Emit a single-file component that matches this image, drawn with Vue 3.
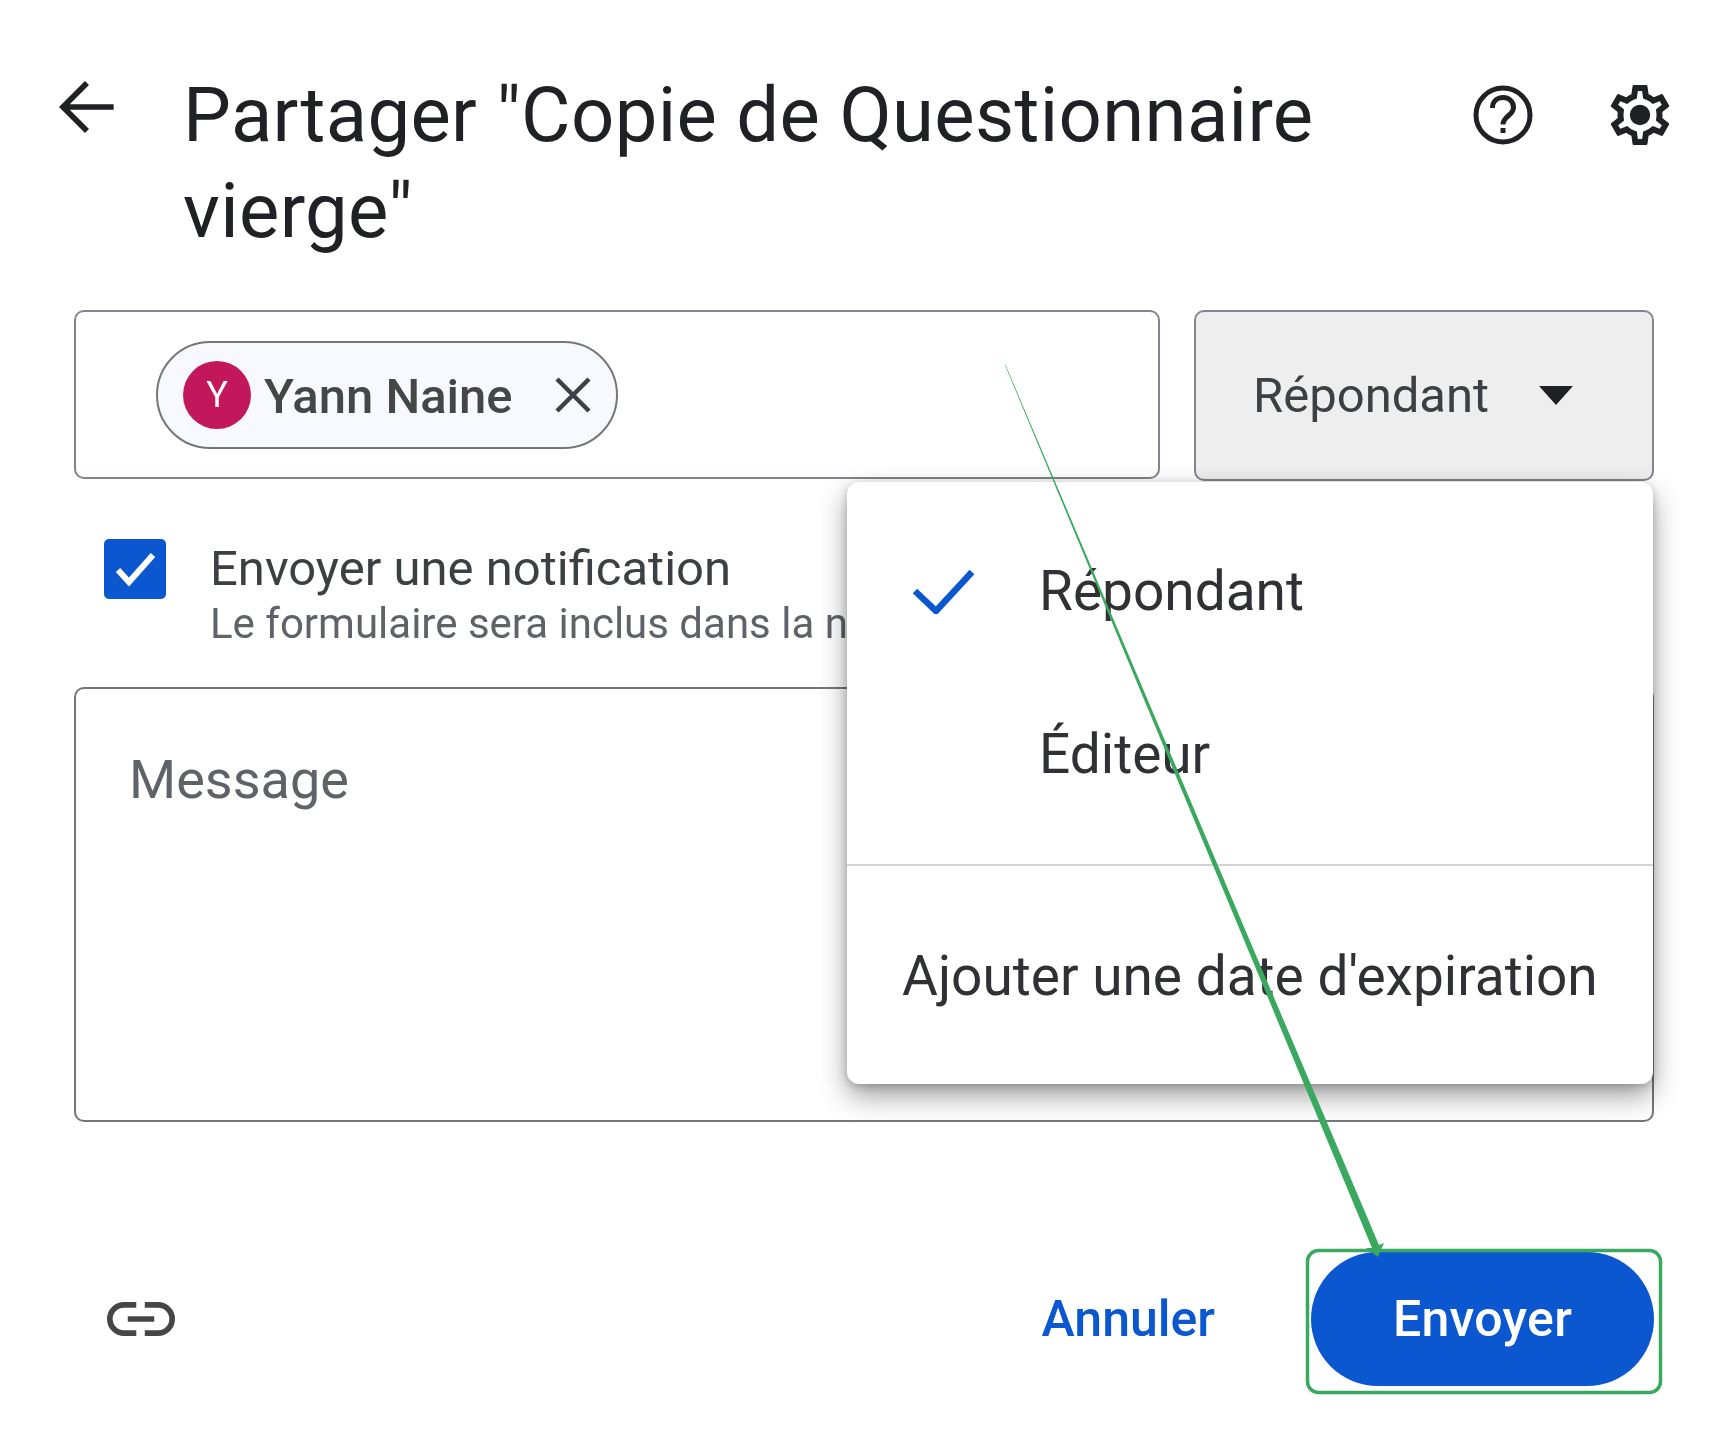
<script setup>
const roles = ['Répondant', 'Éditeur']
</script>

<template>
  <div class="page">
    <header class="header">
      <svg class="back" viewBox="0 0 24 24"><path d="M20 12H5.5M12 4.8 4.8 12l7.2 7.2" fill="none" stroke="#202124" stroke-width="1.7" /></svg>
      <h1 class="title">Partager "Copie de Questionnaire vierge"</h1>
      <svg class="head-icon help" viewBox="0 0 72 72">
        <circle cx="36" cy="36" r="27" fill="none" stroke="#202124" stroke-width="5" />
        <path d="M25.5 29c0-6.5 4.5-10.500 10.500-10.500S46.500 22.500 46.500 28.500c0 8-10.500 8.500-10.500 17" fill="none" stroke="#202124" stroke-width="5" />
        <rect x="33.500" y="49" width="5" height="5" fill="#202124" />
      </svg>
      <svg class="head-icon" viewBox="0 0 24 24"><path d="M19.43 12.98c.04-.32.07-.64.07-.98 0-.34-.03-.66-.07-.98l2.11-1.65c.19-.15.24-.42.12-.64l-2-3.46c-.09-.16-.26-.25-.44-.25-.06 0-.12.01-.17.03l-2.49 1c-.52-.4-1.08-.73-1.69-.98l-.38-2.65C14.46 2.18 14.25 2 14 2h-4c-.25 0-.46.18-.49.42l-.38 2.65c-.61.25-1.17.59-1.69.98l-2.49-1c-.06-.02-.12-.03-.18-.03-.17 0-.34.09-.43.25l-2 3.46c-.13.22-.07.49.12.64l2.11 1.65c-.04.32-.07.65-.07.98 0 .33.03.66.07.98l-2.11 1.65c-.19.15-.24.42-.12.64l2 3.46c.09.16.26.25.44.25.06 0 .12-.01.17-.03l2.49-1c.52.4 1.08.73 1.69.98l.38 2.65c.03.24.24.42.49.42h4c.25 0 .46-.18.49-.42l.38-2.65c.61-.25 1.17-.59 1.69-.98l2.49 1c.06.02.12.03.18.03.17 0 .34-.09.43-.25l2-3.46c.12-.22.07-.49-.12-.64l-2.11-1.65zm-1.98-1.71c.04.31.05.52.05.73 0 .21-.02.43-.05.73l-.14 1.13.89.7 1.08.84-.7 1.21-1.27-.51-1.04-.42-.9.68c-.43.32-.84.56-1.25.73l-1.06.43-.16 1.13-.2 1.35h-1.4l-.19-1.35-.16-1.13-1.06-.43c-.43-.18-.83-.41-1.23-.71l-.91-.7-1.06.43-1.27.51-.7-1.21 1.08-.84.89-.7-.14-1.13c-.03-.31-.05-.54-.05-.74s.02-.43.05-.73l.14-1.13-.89-.7-1.08-.84.7-1.21 1.27.51 1.04.42.9-.68c.43-.32.84-.56 1.25-.73l1.06-.43.16-1.13.2-1.35h1.39l.19 1.35.16 1.13 1.06.43c.43.18.83.41 1.23.71l.91.7 1.06-.43 1.27-.51.7 1.21-1.07.85-.89.7.14 1.13zM12 8.600a3.400 3.400 0 1 0 0 6.800 3.400 3.400 0 0 0 0-6.800z" /></svg>
    </header>

    <div class="share-row">
      <div class="people">
        <div class="chip">
          <span class="avatar">Y</span>
          <span class="chip-name">Yann Naine</span>
          <svg class="chip-close" viewBox="0 0 36 36"><path d="M2 2l32 32M34 2 2 34" fill="none" stroke="#3c4043" stroke-width="4.500" /></svg>
        </div>
      </div>
      <div class="role-select">
        <span>Répondant</span>
        <span class="caret"></span>
      </div>
    </div>

    <div class="notify">
      <span class="checkbox">
        <svg viewBox="0 0 62 60"><path d="M14 31l11 12 24-27" fill="none" stroke="#fff" stroke-width="6" /></svg>
      </span>
      <div class="notify-text">
        <div class="notify-title">Envoyer une notification</div>
        <div class="notify-sub">Le formulaire sera inclus dans la notification</div>
      </div>
    </div>

    <div class="message">Message</div>

    <footer class="footer">
      <svg class="link" viewBox="0 0 72 36"><path d="M31 3H18a15 15 0 0 0 0 30h13M40 3h14a15 15 0 0 1 0 30H40M22 18h28" fill="none" stroke="#444746" stroke-width="6" /></svg>
      <span class="cancel">Annuler</span>
      <button class="send">Envoyer</button>
    </footer>

    <div class="menu">
      <div class="roles">
        <div v-for="(role, i) in roles" :key="role" class="role">
          <svg v-if="i === 0" class="tick" viewBox="0 0 62 44"><path d="M2 21l21 20L59 2" fill="none" stroke="#0b57d0" stroke-width="6.500" /></svg>
          <span>{{ role }}</span>
        </div>
      </div>
      <div class="expiry">Ajouter une date d'expiration</div>
    </div>

    <!-- annotation drawn over the screenshot -->
    <svg class="annotation" viewBox="0 0 1719 1452">
      <polygon points="1005,365 1005.600,365 1379,1245 1384,1243 1378,1257 1366,1248 1372,1248" fill="#3aa95f" />
      <rect x="1307.500" y="1250.500" width="353" height="142" rx="11" fill="none" stroke="#3aa95f" stroke-width="3.500" />
    </svg>
  </div>
</template>

<style scoped>
.page {
  position: relative;
  width: 1719px;
  height: 1452px;
  overflow: hidden;
  background: #fff;
  font-family: Roboto, "Liberation Sans", sans-serif;
  color: #3c4043;
  filter: blur(0.7px);
}

.header {
  display: flex;
  align-items: flex-start;
  padding: 67px 43px 0 47px;
}

.back {
  width: 80px;
  height: 80px;
  margin-right: 56px;
  flex: none;
}

.title {
  width: 1240px;
  margin: 0;
  font-size: 76px;
  line-height: 96px;
  font-weight: 400;
  letter-spacing: 0.35px;
  color: #202124;
  flex: none;
}

.head-icon {
  width: 72px;
  height: 72px;
  margin-top: 12px;
  fill: #202124;
  flex: none;
}

.help {
  margin-left: auto;
  margin-right: 65px;
}

.share-row {
  display: flex;
  gap: 34px;
  margin: 51px 65px 0 74px;
  align-items: flex-start;
}

.people {
  display: flex;
  align-items: center;
  width: 1086px;
  height: 169px;
  box-sizing: border-box;
  padding-left: 80px;
  border: 2px solid #80868b;
  border-radius: 10px;
}

.chip {
  display: flex;
  align-items: center;
  width: 462px;
  height: 108px;
  box-sizing: border-box;
  padding-left: 25px;
  background: #f8f9fe;
  border: 2px solid #747775;
  border-radius: 54px;
}

.avatar {
  display: flex;
  align-items: center;
  justify-content: center;
  width: 68px;
  height: 68px;
  border-radius: 50%;
  background: #c2185b;
  color: #fff;
  font-size: 36px;
  font-weight: 400;
  flex: none;
}

.chip-name {
  margin-left: 13px;
  padding-top: 3px;
  font-size: 49px;
  font-weight: 500;
  color: #444746;
  white-space: nowrap;
}

.chip-close {
  width: 36px;
  height: 36px;
  margin-left: 42px;
  flex: none;
}

.role-select {
  display: flex;
  align-items: center;
  justify-content: space-between;
  width: 460px;
  height: 171px;
  box-sizing: border-box;
  padding: 0 79px 0 57px;
  background: #eeeeee;
  border: 2px solid #80868b;
  border-radius: 10px;
  font-size: 49px;
}

.caret {
  width: 0;
  height: 0;
  border-left: 17px solid transparent;
  border-right: 17px solid transparent;
  border-top: 19px solid #202124;
}

.notify {
  display: flex;
  gap: 44px;
  margin: 58px 0 0 104px;
}

.checkbox {
  display: block;
  width: 62px;
  height: 60px;
  background: #0b57d0;
  border-radius: 5px;
  flex: none;
}

.checkbox svg {
  display: block;
}

.notify-text {
  padding-top: 2px;
  white-space: nowrap;
}

.notify-title {
  font-size: 49px;
  line-height: 56px;
}

.notify-sub {
  margin-top: 4px;
  font-size: 42px;
  line-height: 46px;
  color: #5f6368;
}

.message {
  height: 435px;
  box-sizing: border-box;
  margin: 40px 65px 0 74px;
  padding: 61px 0 0 53px;
  border: 2px solid #747775;
  border-radius: 10px;
  font-size: 54px;
  line-height: 60px;
  color: #5f6368;
}

.footer {
  display: flex;
  align-items: center;
  margin: 130px 65px 0 107px;
}

.link {
  width: 68px;
  height: 36px;
  flex: none;
}

.cancel {
  margin-left: auto;
  margin-right: 96px;
  font-size: 50px;
  font-weight: 500;
  color: #0b57d0;
}

.send {
  width: 343px;
  height: 134px;
  border: 0;
  border-radius: 67px;
  background: #0b57d0;
  color: #fff;
  font-family: inherit;
  font-size: 50px;
  font-weight: 500;
  letter-spacing: 0.3px;
}

.menu {
  position: absolute;
  left: 847px;
  top: 482px;
  width: 806px;
  height: 602px;
  background: #fff;
  border-radius: 12px;
  box-shadow: 0 12px 28px rgba(0, 0, 0, 0.38), 0 2px 8px rgba(0, 0, 0, 0.2);
  font-size: 55px;
  color: #303134;
}

.roles {
  height: 384px;
  box-sizing: border-box;
  padding-top: 34px;
  border-bottom: 2px solid #d3d3d3;
}

.role {
  position: relative;
  height: 163px;
  padding-left: 192px;
  line-height: 150px;
}

.tick {
  position: absolute;
  left: 66px;
  top: 54px;
  width: 62px;
  height: 44px;
}

.expiry {
  padding: 80px 0 0 55px;
  line-height: 60px;
  white-space: nowrap;
}

.annotation {
  position: absolute;
  left: 0;
  top: 0;
  width: 1719px;
  height: 1452px;
  pointer-events: none;
}
</style>
